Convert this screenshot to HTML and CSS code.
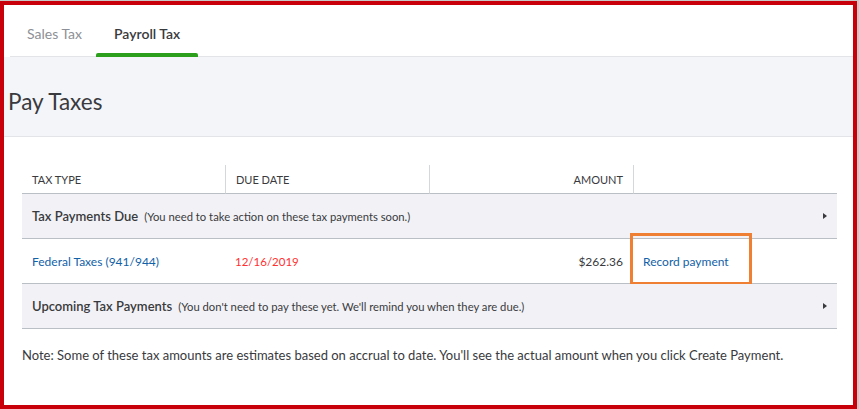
FILE: index.html
```html
<!DOCTYPE html>
<html>
<head>
<meta charset="utf-8">
<link rel="stylesheet" href="styles.css">
</head>
<body>
<div class="frame">
  <div class="tabs">
    <div class="tab">Sales Tax</div>
    <div class="tab active">Payroll Tax</div>
  </div>
  <div class="head">
    <h1 class="title">Pay Taxes</h1>
  </div>
  <div class="content">
    <div class="grid">
      <div class="th">TAX TYPE</div>
      <div class="th sep">DUE DATE</div>
      <div class="th sep right">AMOUNT</div>
      <div class="th sep"></div>

      <div class="group">
        <span class="gtitle">Tax Payments Due</span>
        <span class="ghint">(You need to take action on these tax payments soon.)</span>
        <span class="caret"></span>
      </div>

      <div class="td link">Federal Taxes (941/944)</div>
      <div class="td due">12/16/2019</div>
      <div class="td right">$262.36</div>
      <div class="td action"><span class="link">Record payment</span><span class="highlight"></span></div>

      <div class="group">
        <span class="gtitle">Upcoming Tax Payments</span>
        <span class="ghint">(You don't need to pay these yet. We'll remind you when they are due.)</span>
        <span class="caret"></span>
      </div>
    </div>
    <p class="note">Note: Some of these tax amounts are estimates based on accrual to date. You'll see the actual amount when you click Create Payment.</p>
  </div>
</div>
</body>
</html>
```

FILE: styles.css
```css
* { box-sizing: border-box; }
html, body { margin: 0; padding: 0; }
body {
  width: 859px;
  height: 409px;
  background: #c8c8c8;
  font-family: Lato, "Noto Sans", sans-serif;
  color: #393a3d;
  overflow: hidden;
  padding-top: 1px;
}
.frame {
  width: 857px;
  height: 408px;
  border: 4px solid #c8000a;
  background: #fff;
  display: flex;
  flex-direction: column;
}
.tabs {
  display: flex;
  height: 52px;
  margin-left: 6px;
  border-bottom: 1px solid #e3e4e8;
  align-items: stretch;
}
.tab {
  padding: 0 16px 0 17px;
  font-size: 14px;
  color: #8d9096;
  display: flex;
  align-items: center;
  padding-top: 6px;
  position: relative;
}
.tab.active {
  color: #393a3d;
  font-weight: 600;
  padding-left: 18px;
  padding-right: 18px;
  margin-left: -2px;
}
.tab.active::after {
  content: "";
  position: absolute;
  left: 0;
  right: 0;
  bottom: -1px;
  height: 4px;
  background: #2ca01c;
  border-radius: 2px 2px 0 0;
}
.head {
  background: #f4f5f8;
  height: 80px;
  border-bottom: 1px solid #e3e4e8;
  display: flex;
  align-items: center;
  padding-left: 4px;
}
.title {
  margin: 0;
  font-size: 22.5px;
  font-weight: 400;
  color: #393a3d;
  padding-top: 10px;
}
.content {
  padding: 28px 18px 0 18px;
}
.grid {
  display: grid;
  grid-template-columns: 203px 204px 204px 204px;
}
.th {
  height: 29px;
  font-size: 11px;
  display: flex;
  align-items: center;
  padding: 0 10px;
  border-bottom: 1px solid #babec5;
}
.th.sep { border-left: 1px solid #d4d7dc; }
.right { justify-content: flex-end; }
.group {
  grid-column: 1 / -1;
  height: 45px;
  background: #f2f2f6;
  border-bottom: 1px solid #babec5;
  display: flex;
  align-items: center;
  padding: 0 10px;
  position: relative;
}
.gtitle { font-size: 13px; font-weight: 600; }
.ghint { font-size: 11.25px; margin-left: 6px; }
.caret {
  margin-left: auto;
  width: 0;
  height: 0;
  border-top: 3.5px solid transparent;
  border-bottom: 3.5px solid transparent;
  border-left: 4px solid #393a3d;
}
.td {
  height: 45px;
  border-bottom: 1px solid #babec5;
  display: flex;
  align-items: center;
  padding: 0 10px;
  font-size: 12px;
}
.link { color: #1161a8; }
.due { color: #ff3030; font-size: 11.5px; }
.action { position: relative; }
.highlight {
  position: absolute;
  left: -3px;
  top: -6px;
  width: 122px;
  height: 52px;
  border: 3px solid #ef7f33;
}
.note {
  margin: 18px 0 0 0;
  font-size: 13px;
}
```
